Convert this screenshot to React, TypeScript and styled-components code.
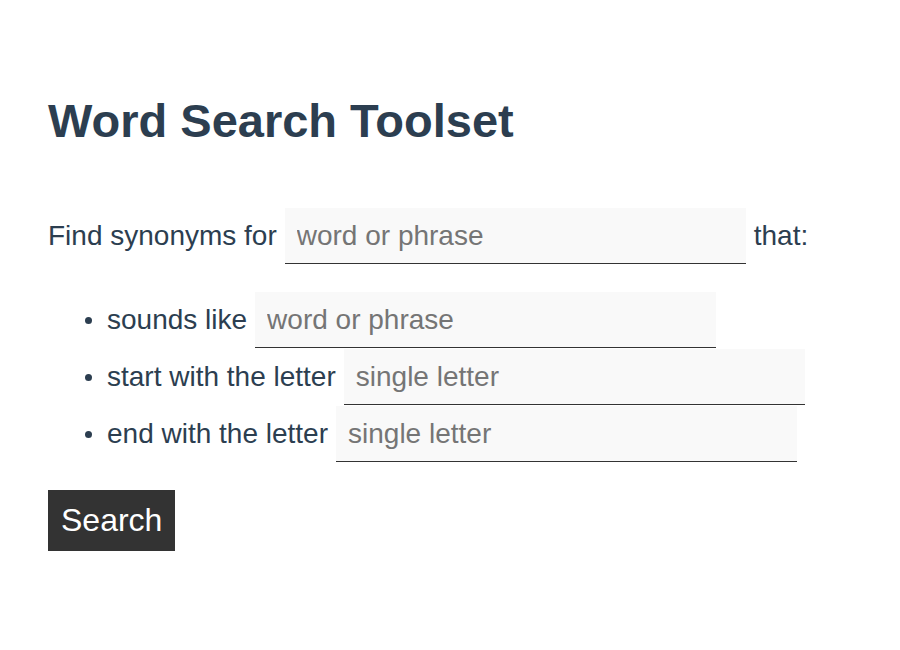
import React from "react";
import styled, { createGlobalStyle } from "styled-components";

const Global = createGlobalStyle`
  html, body { margin: 0; padding: 0; background: #fff; }
  body { font-family: "Liberation Sans", Arial, sans-serif; color: #2c3e50; }
`;

const Page = styled.div`
  padding: 95px 48px 48px 48px;
`;

const Title = styled.h1`
  margin: 0;
  font-size: 47px;
  font-weight: bold;
  color: #2c3e50;
  line-height: 51px;
`;

const Row = styled.div`
  display: flex;
  align-items: center;
  gap: 8px;
  font-size: 28px;
  margin-top: 62px;
`;

const Field = styled.input`
  box-sizing: border-box;
  width: 461px;
  height: 56px;
  border: none;
  border-bottom: 1px solid #333;
  background: #f9f9f9;
  padding: 0 12px;
  font-family: "Liberation Sans", Arial, sans-serif;
  font-size: 28px;
  color: #2c3e50;
  outline: none;
  &::placeholder { color: #757575; }
`;

const List = styled.ul`
  list-style: none;
  margin: 28px 0 0 0;
  padding: 0 0 0 37px;
  display: flex;
  flex-direction: column;
  gap: 1px;
`;

const Item = styled.li`
  display: flex;
  align-items: center;
  font-size: 28px;
  gap: 8px;
`;

const Bullet = styled.span`
  width: 7px;
  height: 7px;
  border-radius: 50%;
  background: #2c3e50;
  margin-right: 7px;
`;

const Button = styled.button`
  margin-top: 28px;
  height: 61px;
  padding: 0 13px;
  border: none;
  background: #333;
  color: #fff;
  font-family: "Liberation Sans", Arial, sans-serif;
  font-size: 32px;
  cursor: pointer;
`;

export default function App() {
  return (
    <>
      <Global />
      <Page>
        <Title>Word Search Toolset</Title>
        <Row>
          <span>Find synonyms for</span>
          <Field placeholder="word or phrase" />
          <span>that:</span>
        </Row>
        <List>
          <Item>
            <Bullet />
            <span>sounds like</span>
            <Field placeholder="word or phrase" />
          </Item>
          <Item>
            <Bullet />
            <span>start with the letter</span>
            <Field placeholder="single letter" />
          </Item>
          <Item>
            <Bullet />
            <span>end with the letter</span>
            <Field placeholder="single letter" />
          </Item>
        </List>
        <Button>Search</Button>
      </Page>
    </>
  );
}
